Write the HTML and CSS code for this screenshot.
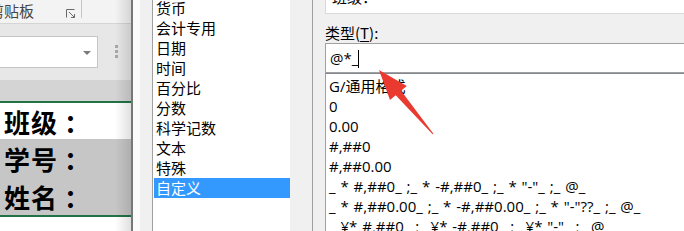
FILE: index.html
```html
<!DOCTYPE html>
<html lang="zh-CN">
<head>
<meta charset="utf-8">
<title>设置单元格格式</title>
<link rel="stylesheet" href="styles.css">
</head>
<body>
<div class="app">
  <div class="sheet">
    <div class="ribbon">
      <span class="ribbon-label">剪贴板</span>
      <svg class="launcher" width="10" height="9" viewBox="0 0 10 9">
        <path d="M0.5 8.5V0.5H8.5" fill="none" stroke="#6a6a6a" stroke-width="1"/>
        <path d="M3 3L8.5 8.5M5 8.5H8.5V5" fill="none" stroke="#6a6a6a" stroke-width="1"/>
      </svg>
      <span class="ribbon-sep"></span>
    </div>
    <div class="formula-area">
      <div class="combo"><span class="combo-arrow"></span></div>
      <div class="dots"><i></i><i></i><i></i></div>
    </div>
    <div class="header-bar"></div>
    <div class="rows">
      <div class="row row-white">班级<span class="colon">：</span></div>
      <div class="row row-gray">学号<span class="colon">：</span></div>
      <div class="row row-gray">姓名<span class="colon">：</span></div>
    </div>
    <div class="below"></div>
  </div>
  <div class="dialog">
    <div class="cat-list">
      <div class="cat-items">
        <div class="cat">货币</div>
        <div class="cat">会计专用</div>
        <div class="cat">日期</div>
        <div class="cat">时间</div>
        <div class="cat">百分比</div>
        <div class="cat">分数</div>
        <div class="cat">科学记数</div>
        <div class="cat">文本</div>
        <div class="cat">特殊</div>
        <div class="cat selected">自定义</div>
      </div>
      <div class="scroll-track"></div>
    </div>
    <div class="right">
      <div class="sample"><span class="sample-text">班级：</span></div>
      <div class="type-label">类型(<u>T</u>):</div>
      <div class="type-input">@*_<span class="caret"></span></div>
      <div class="fmt-list">
        <div class="fmt">G/通用格式</div>
        <div class="fmt">0</div>
        <div class="fmt">0.00</div>
        <div class="fmt">#,##0</div>
        <div class="fmt">#,##0.00</div>
        <div class="fmt">_ * #,##0_ ;_ * -#,##0_ ;_ * "-"_ ;_ @_</div>
        <div class="fmt">_ * #,##0.00_ ;_ * -#,##0.00_ ;_ * "-"??_ ;_ @_</div>
        <div class="fmt">_ ¥* #,##0_ ;_ ¥* -#,##0_ ;_ ¥* "-"_ ;_ @_</div>
      </div>
    </div>
  </div>
  <svg class="arrow" width="684" height="231" viewBox="0 0 684 231">
    <polygon points="379,70 406.8,85.9 401.1,90.7 433.4,133.7 432.6,134.3 395.7,95.3 390,100.1" fill="#ea3a30"/>
  </svg>
</div>
</body>
</html>
```
FILE: styles.css
```css
html, body {
  margin: 0;
  padding: 0;
  width: 684px;
  height: 231px;
  overflow: hidden;
  background: #ffffff;
}

.app {
  position: relative;
  display: flex;
  width: 684px;
  height: 231px;
  overflow: hidden;
  font-family: "Noto Sans CJK SC", "Noto Sans", sans-serif;
  color: #000;
}

/* ---------- left: spreadsheet ---------- */
.sheet {
  position: relative;
  width: 131px;
  flex: none;
  display: flex;
  flex-direction: column;
  overflow: hidden;
}
.sheet::after {
  content: "";
  position: absolute;
  top: 0;
  right: 0;
  bottom: 0;
  width: 16px;
  background: linear-gradient(to right, rgba(0,0,0,0), rgba(0,0,0,0.12));
}

.ribbon {
  height: 23px;
  background: #f3f3f3;
  border-bottom: 1px solid #d5d5d5;
  display: flex;
  align-items: flex-start;
  flex: none;
}
.ribbon-label {
  margin-left: -11px;
  margin-top: 1px;
  font-size: 15px;
  line-height: 20px;
  color: #444;
  white-space: nowrap;
}
.launcher {
  margin-left: 32px;
  margin-top: 9px;
  flex: none;
}
.ribbon-sep {
  width: 1px;
  height: 18px;
  background: #c6c6c6;
  margin-left: 5px;
}

.formula-area {
  height: 56px;
  background: #e7e7e7;
  display: flex;
  align-items: flex-start;
  flex: none;
}
.combo {
  margin-left: -10px;
  margin-top: 12px;
  width: 106px;
  height: 30px;
  background: #fff;
  border: 1px solid #c6c6c6;
  position: relative;
  flex: none;
}
.combo-arrow {
  position: absolute;
  left: 92px;
  top: 14px;
  width: 0;
  height: 0;
  border-left: 4px solid transparent;
  border-right: 4px solid transparent;
  border-top: 4px solid #7a7a7a;
}
.dots {
  margin-left: 17px;
  margin-top: 21px;
  display: flex;
  flex-direction: column;
  gap: 2px;
}
.dots i {
  display: block;
  width: 3px;
  height: 3px;
  background: #a8a8a8;
}

.header-bar {
  height: 21px;
  background: #d4d4d4;
  flex: none;
}

.rows {
  border-top: 2px solid #217346;
  border-bottom: 2px solid #217346;
  flex: none;
}
.row {
  padding-left: 4px;
  font-size: 26px;
  font-weight: 700;
  letter-spacing: 1px;
  white-space: nowrap;
  display: flex;
  align-items: center;
}
.colon {
  margin-left: 6px;
}
.row-white {
  height: 36px;
  background: #ffffff;
}
.row-gray {
  height: 38px;
  background: #c6c6c6;
}
.below {
  flex: 1;
  background: #fff;
}

/* ---------- dialog ---------- */
.dialog {
  flex: 1;
  display: flex;
  border-left: 2px solid #777;
  background: linear-gradient(to right, #fbfbfb 0 7px, #f0f0f0 7px);
}

.cat-list {
  margin-left: 19px;
  width: 159px;
  flex: none;
  display: flex;
  border-left: 1px solid #a0a0a0;
  border-right: 1px solid #a0a0a0;
  background: #fff;
}
.cat-items {
  width: 137px;
  margin-top: -2px;
  font-size: 15px;
}
.cat {
  height: 20px;
  line-height: 20px;
  margin-left: 1px;
  padding-left: 2px;
  white-space: nowrap;
}
.cat.selected {
  background: #3399ff;
  color: #fff;
}
.scroll-track {
  width: 22px;
  background: #f0f0f0;
}

.right {
  margin-left: 12px;
  flex: 1;
  display: flex;
  flex-direction: column;
  min-width: 0;
}
.sample {
  height: 13px;
  background: #fff;
  border-left: 1px solid #d9d9d9;
  border-bottom: 1px solid #d9d9d9;
  overflow: hidden;
  position: relative;
  flex: none;
}
.sample-text {
  display: block;
  margin-left: 6px;
  margin-top: -12px;
  font-size: 15px;
  line-height: 18px;
  white-space: nowrap;
}
.type-label {
  margin-top: 9px;
  height: 22px;
  font-size: 15px;
  line-height: 20px;
  white-space: nowrap;
}
.type-label u {
  text-decoration-thickness: 1px;
  text-underline-offset: 2px;
}
.type-input {
  height: 28px;
  background: #fff;
  border: 1px solid #a0a0a0;
  border-right: none;
  padding-left: 4px;
  font-family: "Open Sans", "Noto Sans CJK SC", sans-serif;
  font-size: 15px;
  line-height: 28px;
  white-space: nowrap;
  display: flex;
  align-items: center;
  flex: none;
}
.caret {
  display: inline-block;
  width: 1px;
  height: 18px;
  background: #000;
  margin-top: 2px;
}
.fmt-list {
  flex: 1;
  background: #fff;
  border-top: 1px solid #828790;
  border-left: 1px solid #a0a0a0;
  padding-top: 2px;
  font-family: "Open Sans", "Noto Sans CJK SC", sans-serif;
  font-size: 15px;
  word-spacing: 1px;
}
.fmt {
  height: 20px;
  line-height: 20px;
  padding-left: 3px;
  white-space: nowrap;
}

.arrow {
  position: absolute;
  left: 0;
  top: 0;
  pointer-events: none;
}
```
